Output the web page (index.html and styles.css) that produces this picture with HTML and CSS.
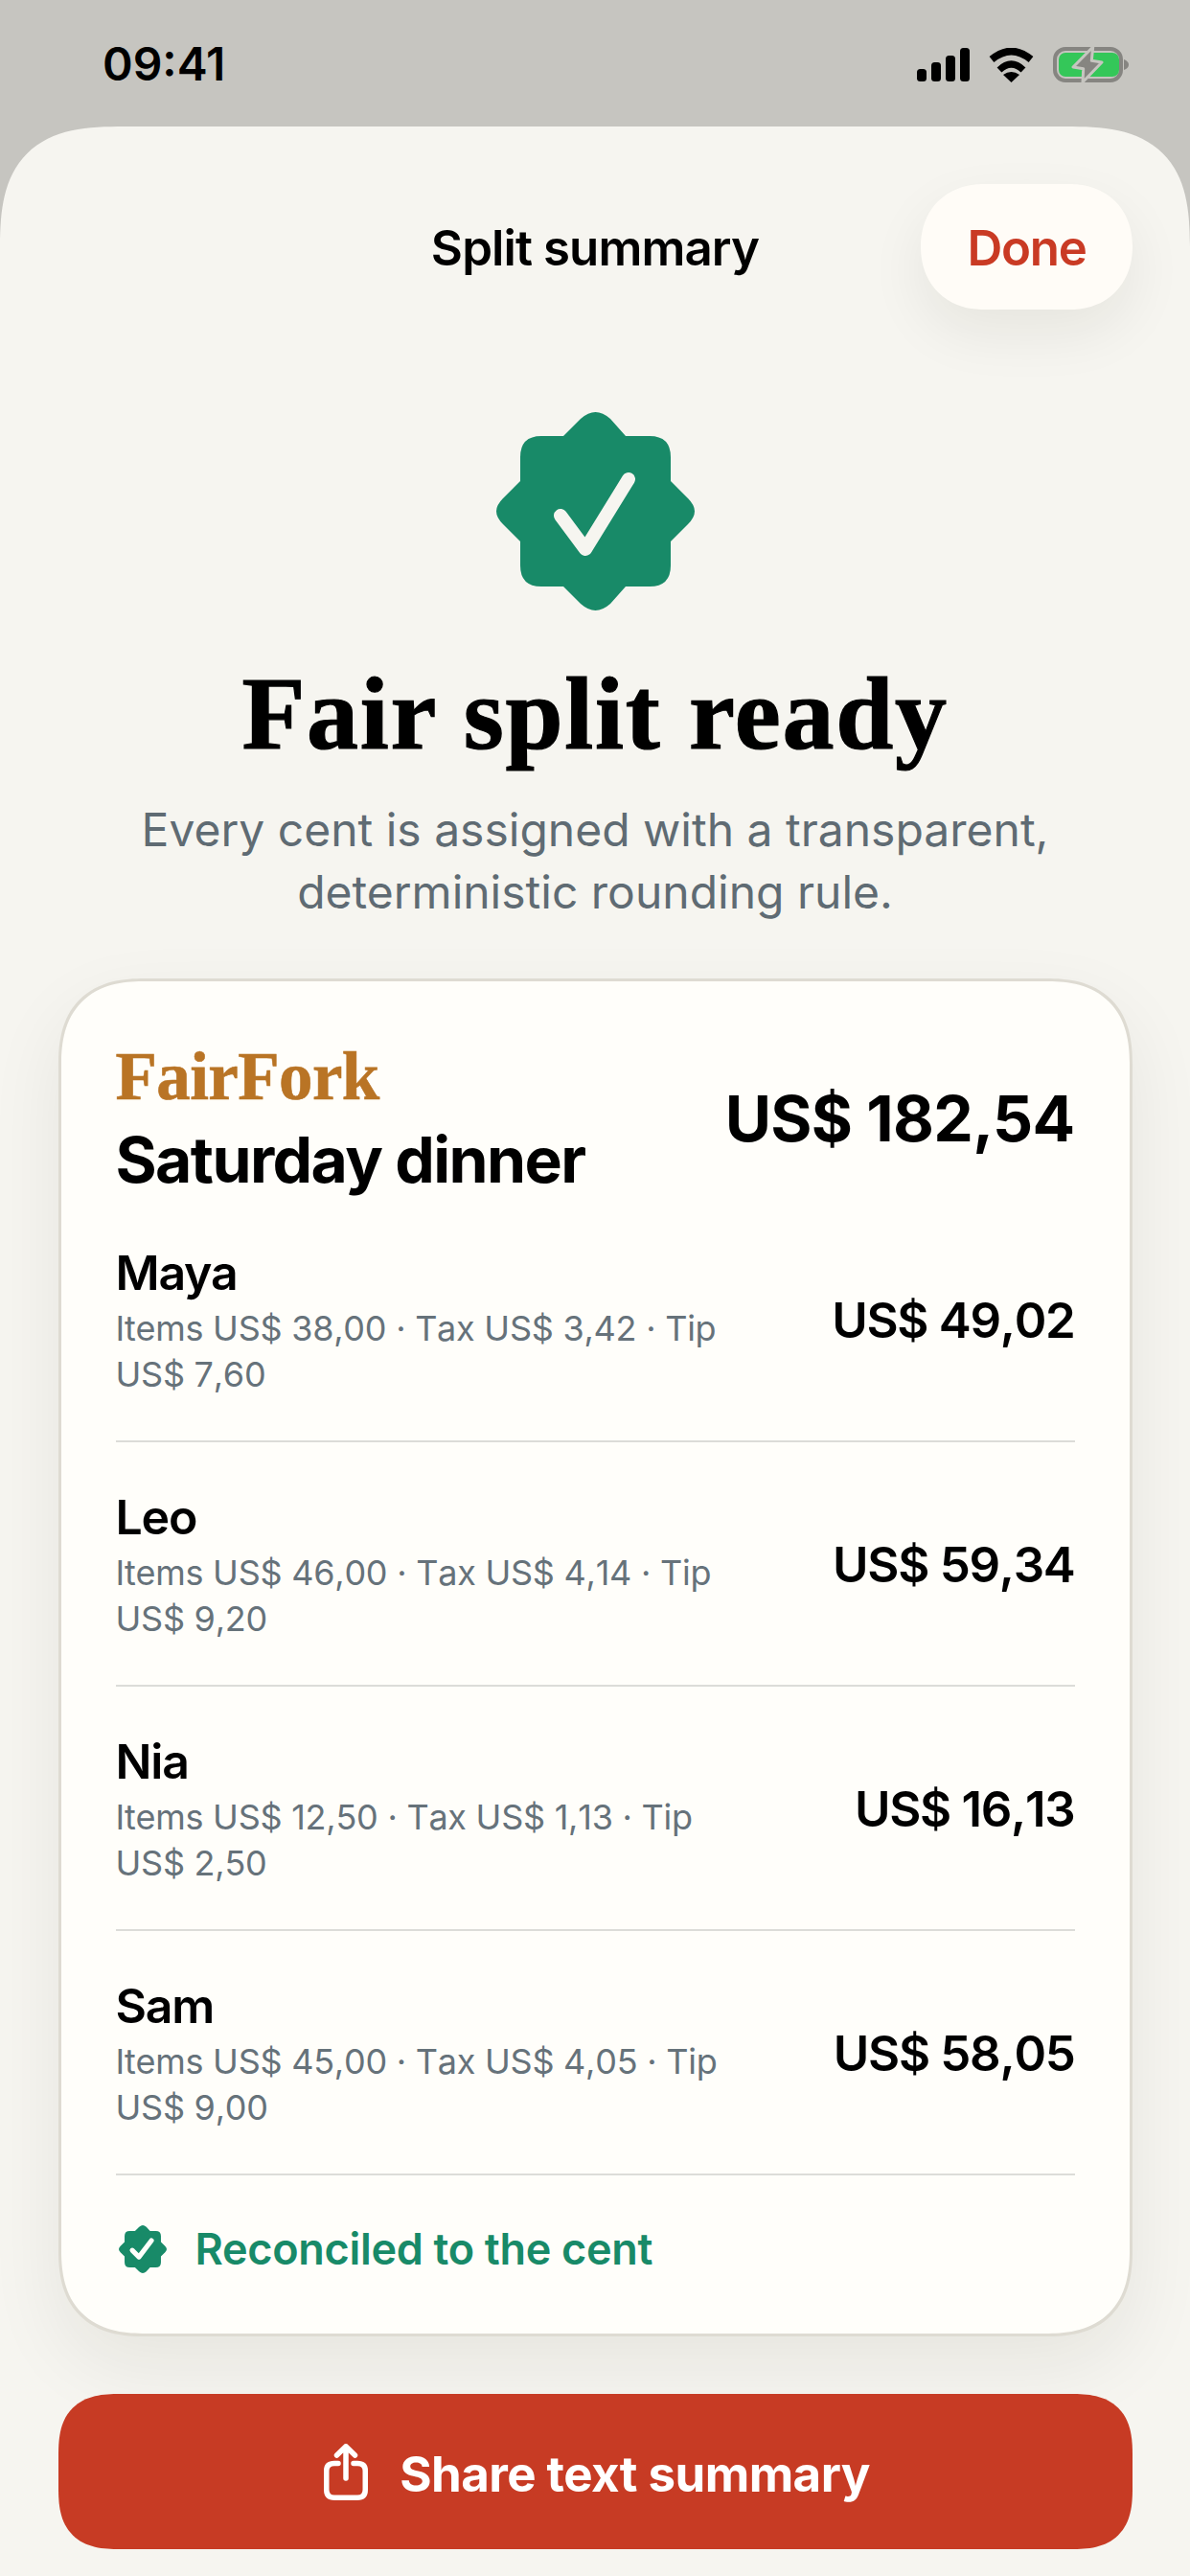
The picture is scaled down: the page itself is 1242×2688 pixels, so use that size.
FILE: index.html
```html
<!DOCTYPE html>
<html lang="en">
<head>
<meta charset="utf-8">
<title>Split summary</title>
<link rel="stylesheet" href="styles.css">
</head>
<body>
<div class="app">
  <header class="status">
    <span class="time">09:41</span>
    <div class="status-icons">
      <svg class="ic-signal" width="55" height="35" viewBox="0 0 55 35"><rect x="0" y="22" width="10" height="13" rx="3.5"/><rect x="15" y="15" width="10" height="20" rx="3.5"/><rect x="30" y="8" width="10" height="27" rx="3.5"/><rect x="45" y="0" width="10" height="35" rx="3.5"/></svg>
      <svg class="ic-wifi" width="47" height="36" viewBox="0 0 47 36"><path d="M3 12Q23.5-5 44 12" fill="none" stroke="#000" stroke-width="7.5"/><path d="M11 23Q23.5 11 36 23" fill="none" stroke="#000" stroke-width="7"/><path d="M23.5 36L15 28Q23.5 22 32 28Z"/></svg>
      <svg class="ic-batt" width="79" height="37" viewBox="0 0 79 37"><rect x="2" y="2" width="69" height="33" rx="11" fill="none" stroke="#868581" stroke-width="4"/><rect x="6" y="6" width="63" height="25" rx="7" fill="#34c759"/><path d="M74 13Q79 15 79 18.500Q79 22 74 24Z" fill="#868581"/><path d="M41.700 0L21 21L31.700 22.700L31 36.700L51 16L40.300 14.300Z" fill="#868581" stroke="#c6c5c0" stroke-width="3" stroke-linejoin="round"/></svg>
    </div>
  </header>
  <main class="sheet">
    <div class="nav">
      <h2 class="nav-title">Split summary</h2>
      <button class="done">Done</button>
    </div>
    <svg class="hero-badge" width="207" height="207" viewBox="0 0 207 207"><path fill="#188a68" d="M70 25L88 7Q96 0 103.500 0Q111 0 119 7L135 25H160Q182 25 182 47V72L200 90Q207 97 207 103.500Q207 110 200 117L182 135V160Q182 182 160 182H135L119 200Q111 207 103.500 207Q96 207 88 200L70 182H47Q25 182 25 160V135L7 117Q0 110 0 103.500Q0 97 7 90L25 72V47Q25 25 47 25Z"/><path d="M67 108L93 143L138 70" fill="none" stroke="#f6f5f0" stroke-width="14" stroke-linecap="round" stroke-linejoin="round"/></svg>
    <h1 class="hero-title">Fair split ready</h1>
    <p class="hero-sub">Every cent is assigned with a transparent, deterministic rounding rule.</p>
    <section class="card">
      <div class="card-head">
        <div>
          <div class="brand">FairFork</div>
          <div class="event">Saturday dinner</div>
        </div>
        <div class="total">US$ 182,54</div>
      </div>
      <div class="row">
        <div class="who"><div class="name">Maya</div><div class="detail">Items US$ 38,00 · Tax US$ 3,42 · Tip US$ 7,60</div></div>
        <div class="amount">US$ 49,02</div>
      </div>
      <div class="row">
        <div class="who"><div class="name">Leo</div><div class="detail">Items US$ 46,00 · Tax US$ 4,14 · Tip US$ 9,20</div></div>
        <div class="amount">US$ 59,34</div>
      </div>
      <div class="row">
        <div class="who"><div class="name">Nia</div><div class="detail">Items US$ 12,50 · Tax US$ 1,13 · Tip US$ 2,50</div></div>
        <div class="amount">US$ 16,13</div>
      </div>
      <div class="row">
        <div class="who"><div class="name">Sam</div><div class="detail">Items US$ 45,00 · Tax US$ 4,05 · Tip US$ 9,00</div></div>
        <div class="amount">US$ 58,05</div>
      </div>
      <div class="recon">
        <svg width="50" height="50" viewBox="0 0 207 207"><path fill="#188a68" d="M70 25L88 7Q96 0 103.500 0Q111 0 119 7L135 25H160Q182 25 182 47V72L200 90Q207 97 207 103.500Q207 110 200 117L182 135V160Q182 182 160 182H135L119 200Q111 207 103.500 207Q96 207 88 200L70 182H47Q25 182 25 160V135L7 117Q0 110 0 103.500Q0 97 7 90L25 72V47Q25 25 47 25Z"/><path d="M58 108L87 137L141 66" fill="none" stroke="#fffefa" stroke-width="21" stroke-linecap="round" stroke-linejoin="round"/></svg>
        <span>Reconciled to the cent</span>
      </div>
    </section>
    <button class="share">
      <svg width="46" height="59" viewBox="0 0 46 59"><path d="M15 20.500H11Q2.750 20.500 2.750 28V48Q2.750 56.250 11 56.250H35Q43.250 56.250 43.250 48V28Q43.250 20.500 35 20.500H31M23 36V3M13.500 12L23 2.750L32.500 12" fill="none" stroke="#fff" stroke-width="5.500" stroke-linecap="round" stroke-linejoin="round"/></svg>
      <span class="share-label">Share text summary</span>
    </button>
  </main>
</div>
</body>
</html>
```
FILE: styles.css
```css
* { box-sizing: border-box; }
html, body { margin: 0; padding: 0; }
body { width: 1242px; height: 2688px; overflow: hidden; background: #c6c5c0; font-family: Inter, "Liberation Sans", sans-serif; color: #000; }
.app { width: 1242px; height: 2688px; display: flex; flex-direction: column; background: #c6c5c0; overflow: hidden; }
.status { height: 132px; flex: none; display: flex; justify-content: space-between; align-items: flex-start; padding: 42px 64px 0 107px; }
.time { font-size: 48px; font-weight: 600; line-height: 50px; }
.status-icons { display: flex; align-items: center; gap: 20px; padding-top: 7px; }
.ic-batt { display: block; }
.sheet { flex: 1; background: #f6f5f0; border-radius: 130px 130px 0 0; corner-shape: superellipse(1.5); display: flex; flex-direction: column; align-items: center; padding: 60px 60px 0; }
.nav { width: 100%; position: relative; display: flex; justify-content: flex-end; }
.nav-title { position: absolute; left: 0; right: 0; top: 0; bottom: 0; margin: 0; padding-top: 2px; display: flex; align-items: center; justify-content: center; font-size: 51px; font-weight: 600; letter-spacing: -.9px; line-height: 60px; }
.done { width: 221px; height: 131px; border: 0; border-radius: 66px; corner-shape: superellipse(1.1); background: #fffcf7; color: #c93a24; font: 600 51px Inter, sans-serif; letter-spacing: -1.3px; padding: 2px 0 0; box-shadow: 0 24px 60px rgba(30, 30, 20, .07); }
.hero-badge { display: block; margin-top: 107px; flex: none; }
.hero-title { margin: 43px 0 0; font-family: "Liberation Serif", serif; font-weight: 700; font-size: 108px; letter-spacing: 1.7px; -webkit-text-stroke: 1.2px #000; line-height: 130px; }
.hero-sub { margin: 23px 0 0; width: 1000px; text-align: center; font-size: 48px; letter-spacing: 0; line-height: 65px; color: #5f6b73; }
.card { width: 1121px; height: 1417px; margin-top: 58px; flex: none; background: #fffefa; border: 3px solid #dedbd2; border-radius: 90px; corner-shape: superellipse(1.3); padding: 0 57px; box-shadow: 0 30px 80px rgba(30, 30, 20, .07); }
.card-head { display: flex; justify-content: space-between; align-items: center; padding-top: 59px; }
.brand { font-family: "Liberation Serif", serif; font-weight: 700; font-size: 71px; line-height: 80px; letter-spacing: -.6px; -webkit-text-stroke: .6px #b97425; color: #b97425; }
.event { margin-top: 7px; font-size: 66px; font-weight: 700; letter-spacing: -1.6px; line-height: 80px; }
.total { font-size: 66px; font-weight: 700; letter-spacing: -.7px; line-height: 80px; }
.row { height: 255px; display: flex; justify-content: space-between; align-items: center; border-bottom: 2px solid #dcdcd8; padding-top: 3px; }
.who { width: 660px; }
.name { font-size: 50px; font-weight: 600; letter-spacing: -1.2px; line-height: 61px; }
.detail { margin-top: 3px; font-size: 36px; letter-spacing: -.25px; line-height: 48px; font-kerning: none; color: #66727a; }
.amount { margin-bottom: 2px; font-size: 51px; font-weight: 600; letter-spacing: -1.3px; line-height: 61px; font-kerning: none; }
.recon { display: flex; align-items: center; gap: 30px; padding: 52px 0 0 3px; color: #188a68; font-size: 45px; font-weight: 600; letter-spacing: -.3px; line-height: 50px; }
.recon svg { display: block; }
.share { width: 1121px; height: 162px; flex: none; margin-top: 60px; border: 0; border-radius: 64px; corner-shape: superellipse(1.4); background: #c73b24; color: #fff; font: 700 51px Inter, sans-serif; letter-spacing: -.55px; padding: 0 0 0 4px; display: flex; align-items: center; justify-content: center; gap: 33px; }
.share-label { padding-top: 4px; }
```
